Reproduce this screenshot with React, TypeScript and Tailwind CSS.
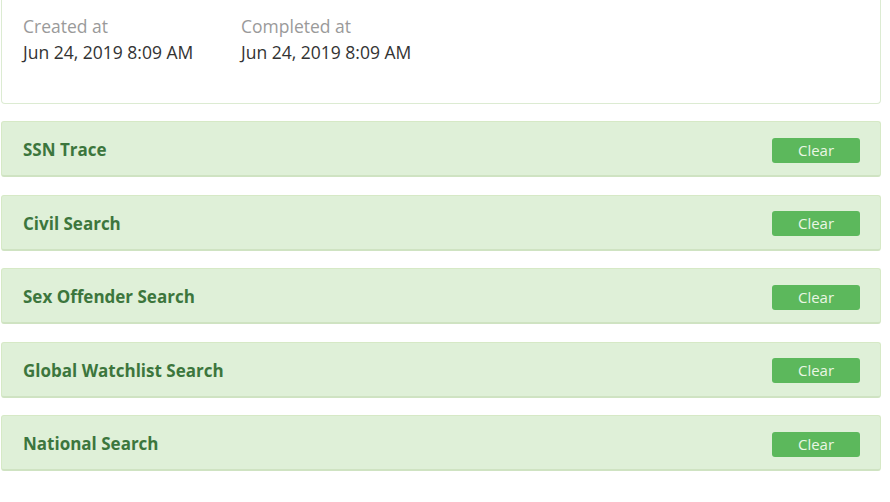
import React from "react";

type Check = {
  name: string;
  status: string;
};

const checks: Check[] = [
  {name: "SSN Trace", status: "Clear"},
  {name: "Civil Search", status: "Clear"},
  {name: "Sex Offender Search", status: "Clear"},
  {name: "Global Watchlist Search", status: "Clear"},
  {name: "National Search", status: "Clear"},
];

const CheckRow = ({check}: {check: Check}) => (
  <div className="flex h-[56px] items-center justify-between rounded-[3px] border border-[#d6e9c6] border-b-2 border-b-[#cfe3c2] bg-[#dff0d8] pl-[21px] pr-[20px] pt-[3px]">
    <span className="text-[17px] font-bold text-[#3c763d]">{check.name}</span>
    <span className="flex h-[25px] w-[88px] items-center justify-center rounded-[3px] bg-[#5cb85c] text-[15px] text-[#eaf6e4]">
      {check.status}
    </span>
  </div>
);

export default function App() {
  return (
    <div
      className="min-h-[502px] bg-white pl-[1px] pr-[9px]"
      style={{fontFamily: '"Open Sans", "Noto Sans", sans-serif'}}
    >
      <div className="flex h-[104px] gap-[48px] whitespace-nowrap rounded-b-[4px] border border-t-0 border-[#dcebd2] bg-white px-[21px] pt-[13px]">
        <div className="w-[170px] shrink-0">
          <div className="text-[17.5px] leading-[26px] text-[#9a9a9a]">Created at</div>
          <div className="text-[17.5px] leading-[26px] text-[#333]">Jun 24, 2019 8:09 AM</div>
        </div>
        <div>
          <div className="text-[17.5px] leading-[26px] text-[#9a9a9a]">Completed at</div>
          <div className="text-[17.5px] leading-[26px] text-[#333]">Jun 24, 2019 8:09 AM</div>
        </div>
      </div>
      <div className="mt-[17px] flex flex-col gap-[17.5px]">
        {checks.map((c) => (
          <CheckRow key={c.name} check={c} />
        ))}
      </div>
    </div>
  );
}
